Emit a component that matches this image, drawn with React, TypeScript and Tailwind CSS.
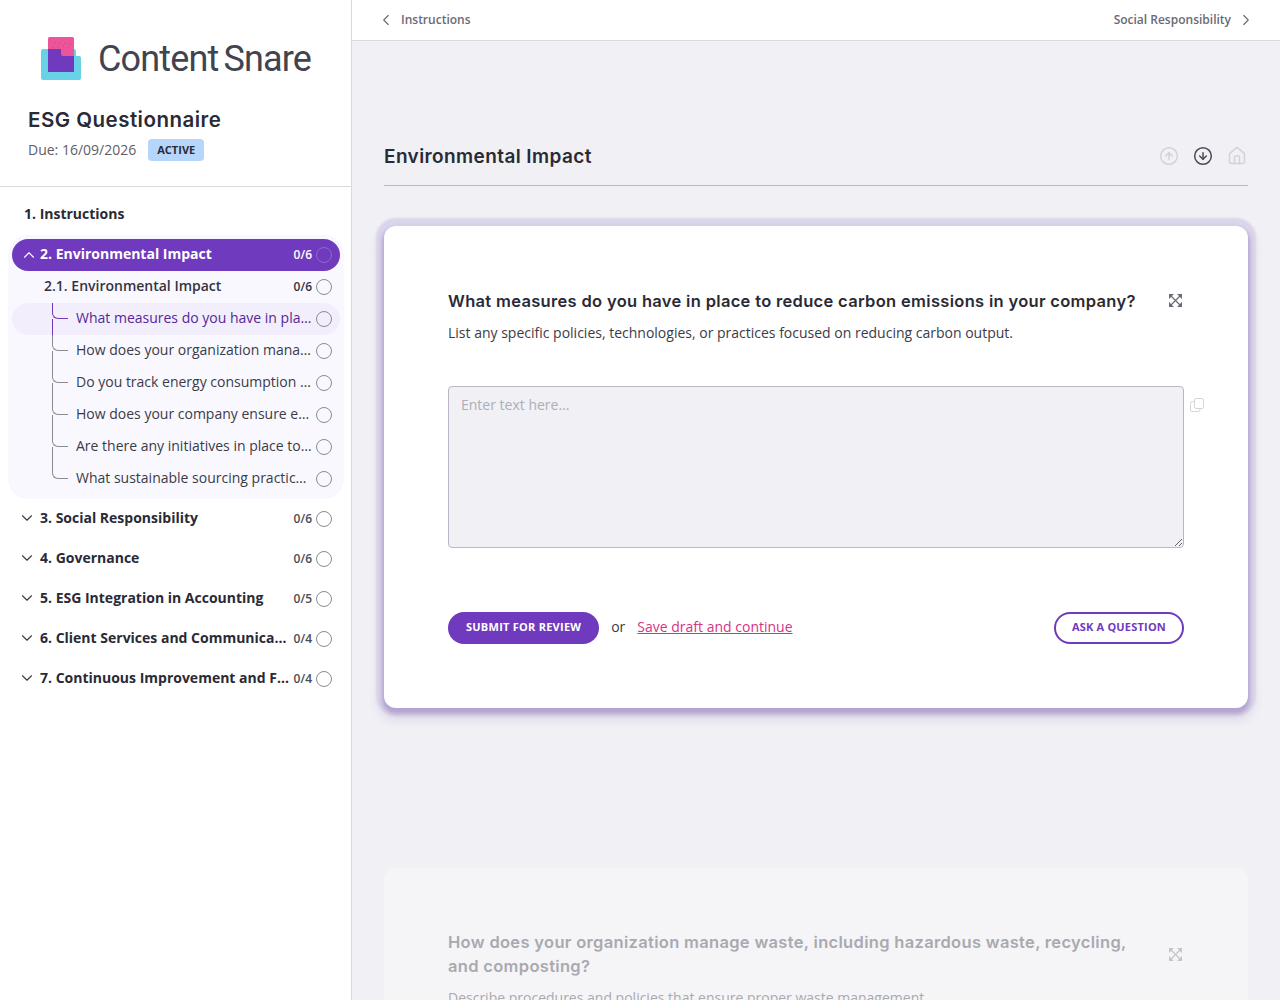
import React from 'react';
import { ChevronDown, ChevronLeft, ChevronRight, ChevronUp, CircleArrowDown, CircleArrowUp, House } from 'lucide-react';

const subQuestions = [
  'What measures do you have in place to reduce carbon emissions in your company?',
  'How does your organization manage waste, including hazardous waste, recycling, and composting?',
  'Do you track energy consumption and have targets to reduce it over time in your company?',
  'How does your company ensure ethical sourcing across its supply chain?',
  'Are there any initiatives in place to reduce water usage across operations?',
  'What sustainable sourcing practices do you have in place for materials?',
];

const sections = [
  { title: '3. Social Responsibility', count: '0/6' },
  { title: '4. Governance', count: '0/6' },
  { title: '5. ESG Integration in Accounting', count: '0/5' },
  { title: '6. Client Services and Communication', count: '0/4' },
  { title: '7. Continuous Improvement and Feedback', count: '0/4' },
];

const Circle = ({ className = 'border-[#8b8b95]' }: { className?: string }) => (
  <span className={`w-4 h-4 rounded-full border shrink-0 ${className}`} />
);

const Logo = () => (
  <svg width="40" height="44" viewBox="0 0 40 44" className="shrink-0">
    <path d="M2 12h31a2 2 0 0 1 2 2v5h3a2 2 0 0 1 2 2v20a2 2 0 0 1-2 2H2a2 2 0 0 1-2-2V14a2 2 0 0 1 2-2z" fill="#69d2e7" />
    <rect x="7" y="0" width="26" height="20" rx="1.5" fill="#ee5499" />
    <path d="M7 12h13v5a2 2 0 0 0 2 2h11v16H7z" fill="#6f3abd" />
    <g fill="#c23a8c">
      <circle cx="14" cy="6" r="0.5" /><circle cx="19" cy="6" r="0.5" /><circle cx="24" cy="6" r="0.5" /><circle cx="29" cy="7" r="0.5" />
      <circle cx="12" cy="10" r="0.5" /><circle cx="17" cy="10" r="0.5" /><circle cx="22" cy="9" r="0.5" /><circle cx="27" cy="10" r="0.5" />
    </g>
  </svg>
);

const CopyIcon = () => (
  <svg width="14" height="14" viewBox="0 0 14 14" fill="none" stroke="#d4d4da" strokeWidth="1">
    <rect x="4.5" y="0.5" width="9" height="10" rx="1.5" />
    <path d="M4.500 3.500h-2a2 2 0 0 0-2 2v6.500a1.500 1.500 0 0 0 1.500 1.500h6a2 2 0 0 0 2-2v-1" />
  </svg>
);

// four filled corner arrowheads joined by diagonals
const ExpandIcon = ({ color }: { color: string }) => (
  <svg width="13" height="13" viewBox="0 0 13 13" className="shrink-0 mr-[2px]">
    <path d="M1.500 1.500l10 10M11.500 1.500l-10 10" fill="none" stroke={color} strokeWidth="1.200" />
    <path d="M0 0h5L3.700 1.300 1.300 3.700 0 5zM13 0v5L11.700 3.700 9.300 1.300 8 0zM0 13V8l1.300 1.300 2.400 2.400L5 13zM13 13H8l1.300-1.300 2.400-2.400L13 8z" fill={color} />
  </svg>
);

const Sidebar = () => (
  <aside className="w-[352px] h-full shrink-0 bg-white border-r border-[#d9d9de] flex flex-col">
    <div className="h-[187px] shrink-0 border-b border-[#d9d9de] px-7">
      <div className="flex items-center pt-[37px] pl-[13px] gap-[17px]">
        <Logo />
        <span className="font-['Roboto',sans-serif] text-[36px] leading-[44px] text-[#3f4450] tracking-[-0.85px] [word-spacing:-3px]">Content Snare</span>
      </div>
      <h1 className="mt-[25px] text-[20.5px] leading-7 font-semibold text-[#2a2a36] font-['Inter',sans-serif] tracking-[0.48px]">ESG Questionnaire</h1>
      <div className="mt-[5px] flex items-center gap-3">
        <span className="text-sm text-[#5e5e6a]">Due: 16/09/2026</span>
        <span className="h-[22px] w-14 flex items-center justify-center rounded-sm bg-[#b5d5fb] text-[11px] font-bold text-[#2a2a36]">ACTIVE</span>
      </div>
    </div>

    <div className="h-[48px] shrink-0 flex items-center pl-6 pt-[6px] text-sm font-bold text-[#2a2a36]">1. Instructions</div>

    <div className="ml-2 mr-[7px] p-1 rounded-[20px] bg-[#f9f8ff]">
      <div className="h-8 flex items-center rounded-2xl bg-[#6f3abd] pl-2 pr-2 text-white">
        <ChevronUp className="w-[18px] h-[18px] mr-[2px]" strokeWidth={1.5} />
        <span className="text-sm font-bold flex-1 -mt-[2px]">2. Environmental Impact</span>
        <span className="text-xs font-semibold mr-1 -mt-[1px]">0/6</span>
        <Circle className="border-[#8b6bc4]" />
      </div>
      <div className="h-8 flex items-center pl-8 pr-2">
        <span className="text-sm font-semibold text-[#33333f] flex-1 -mt-[2px]">2.1. Environmental Impact</span>
        <span className="text-xs font-semibold text-[#33333f] mr-1 -mt-[1px]">0/6</span>
        <Circle />
      </div>
      {subQuestions.map((q, i) => {
        const active = i === 0;
        const last = i === subQuestions.length - 1;
        return (
          <div key={q} className={`relative h-8 flex items-center pl-16 pr-2 rounded-2xl ${active ? 'bg-[#f2eefb]' : ''}`}>
            <span className={`absolute left-10 top-0 w-4 h-4 border-l border-b rounded-bl-md ${active ? 'border-[#6f3abd]' : 'border-[#8b8b95]'}`} />
            {!last && <span className={`absolute left-10 top-4 bottom-0 border-l ${active ? 'border-[#6f3abd]' : 'border-[#8b8b95]'}`} />}
            <span className={`text-sm flex-1 truncate mr-[3px] -mt-[2px] ${active ? 'text-[#54289a]' : 'text-[#3b3b47]'}`}>{q}</span>
            <Circle />
          </div>
        );
      })}
    </div>

    {sections.map((s) => (
      <div key={s.title} className="h-10 shrink-0 flex items-center pl-[18px] pr-[19px]">
        <ChevronDown className="w-[18px] h-[18px] text-[#3b3b47] mr-1 -mt-[2px]" strokeWidth={1.5} />
        <span className="text-sm font-bold text-[#2a2a36] flex-1 truncate mr-1 -mt-[2px]">{s.title}</span>
        <span className="text-xs font-semibold text-[#4b4b57] mr-1 -mt-[1px]">{s.count}</span>
        <Circle />
      </div>
    ))}
  </aside>
);

const TopBar = () => (
  <div className="h-[41px] shrink-0 bg-white border-b border-[#d9d9de] flex items-center justify-between px-[25px] text-xs font-semibold text-[#6a6a76]">
    <div className="flex items-center gap-[6px]">
      <ChevronLeft className="w-[18px] h-[18px]" strokeWidth={1.5} />
      <span>Instructions</span>
    </div>
    <div className="flex items-center gap-[6px]">
      <span>Social Responsibility</span>
      <ChevronRight className="w-[18px] h-[18px]" strokeWidth={1.5} />
    </div>
  </div>
);

const QuestionCard = () => (
  <div className="rounded-xl bg-white px-16 pt-16 h-[482px] shadow-[0_4px_4px_2px_rgba(120,90,170,0.4),0_0_2px_8px_#dbd5ea,0_6px_8px_7px_rgba(120,90,170,0.12)]">
    <div className="flex items-center justify-between h-[21px]">
      <h3 className="font-['Inter',sans-serif] text-[16.5px] font-semibold text-[#2a2a36] tracking-[0.32px] pt-[2px]">What measures do you have in place to reduce carbon emissions in your company?</h3>
      <ExpandIcon color="#6a6a76" />
    </div>
    <p className="mt-[12px] text-sm leading-5 text-[#3b3b47]">List any specific policies, technologies, or practices focused on reducing carbon output.</p>
    <div className="relative mt-[43px]">
      <textarea
        placeholder="Enter text here..."
        className="block w-full h-[162px] rounded-sm border border-[#b9b6c6] bg-[#f0f0f5] px-3 py-2 text-sm leading-5 placeholder:text-[#aeaeb6] outline-none"
      />
      <span className="absolute left-full top-[12px] ml-[6px]">
        <CopyIcon />
      </span>
    </div>
    <div className="mt-16 flex items-center">
      <button className="h-8 px-[18px] pb-[2px] rounded-full bg-[#6f3abd] text-[11px] font-bold tracking-[0.25px] text-white">SUBMIT FOR REVIEW</button>
      <span className="ml-3 text-sm text-[#3b3b47] -mt-[2px]">or</span>
      <a className="ml-3 text-sm text-[#d63384] underline -mt-[2px]">Save draft and continue</a>
      <button className="ml-auto h-8 px-4 pb-[2px] rounded-full border-2 border-[#6f3abd] bg-white text-[11px] font-bold tracking-[0.2px] text-[#6f3abd]">ASK A QUESTION</button>
    </div>
  </div>
);

const NextCard = () => (
  <div className="mt-40 rounded-xl bg-[#f5f5f8] px-16 pt-[62px] h-[300px] text-[#a9a9b0]">
    <div className="flex items-center justify-between">
      <h3 className="font-['Inter',sans-serif] text-[16.5px] leading-6 font-semibold w-[690px] tracking-[0.32px]">How does your organization manage waste, including hazardous waste, recycling, and composting?</h3>
      <ExpandIcon color="#c4c4ca" />
    </div>
    <p className="mt-[10px] text-sm leading-5">Describe procedures and policies that ensure proper waste management.</p>
  </div>
);

export default function App() {
  return (
    <div className="h-[1000px] w-[1280px] flex overflow-hidden bg-[#f0f0f5] font-['Open_Sans',sans-serif]">
      <Sidebar />
      <main className="flex-1 min-w-0 flex flex-col">
        <TopBar />
        <div className="px-8">
          <div className="mt-[100px] h-[45px] border-b border-[#b9b9c1] flex items-start justify-between pr-px">
            <h2 className="font-['Inter',sans-serif] text-[19px] leading-[32px] font-semibold text-[#2a2a36] tracking-[0.4px]">Environmental Impact</h2>
            <div className="flex items-center gap-[14px] pt-[5px]">
              <CircleArrowUp className="w-5 h-5 text-[#d2d2d8]" strokeWidth={1.8} />
              <CircleArrowDown className="w-5 h-5 text-[#4b4b57]" strokeWidth={1.8} />
              <House className="w-5 h-5 text-[#d2d2d8]" strokeWidth={1.8} />
            </div>
          </div>
          <div className="mt-10">
            <QuestionCard />
            <NextCard />
          </div>
        </div>
      </main>
    </div>
  );
}
